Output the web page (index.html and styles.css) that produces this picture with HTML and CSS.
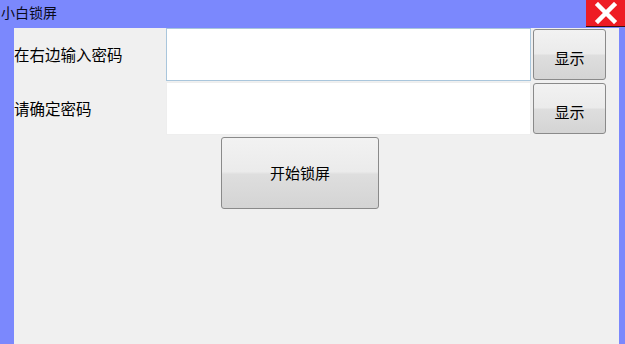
FILE: index.html
```html
<!DOCTYPE html>
<html>
<head>
<meta charset="utf-8">
<link rel="stylesheet" href="styles.css">
</head>
<body>
<div class="window">
  <div class="titlebar">
    <span class="title">小白锁屏</span>
    <div class="close">
      <svg width="24" height="22" viewBox="0 0 24 22"><path d="M4 3 L20 19 M20 3 L4 19" stroke="#fff" stroke-width="4.5" stroke-linecap="square"/></svg>
    </div>
  </div>
  <div class="body">
    <div class="row">
      <label class="label">在右边输入密码</label>
      <div class="input focused"></div>
      <button class="btn small">显示</button>
    </div>
    <div class="row">
      <label class="label">请确定密码</label>
      <div class="input"></div>
      <button class="btn small">显示</button>
    </div>
    <div class="actions">
      <button class="btn big">开始锁屏</button>
    </div>
  </div>
</div>
</body>
</html>
```
FILE: styles.css
```css
html, body {
  margin: 0;
  padding: 0;
  width: 625px;
  height: 344px;
  overflow: hidden;
  background: #7b88fd;
  font-family: "Noto Sans CJK SC", "Liberation Sans", sans-serif;
  font-size: 15px;
  color: #000;
}
.window {
  display: flex;
  flex-direction: column;
  height: 344px;
}
.titlebar {
  height: 28px;
  display: flex;
  align-items: flex-start;
  justify-content: space-between;
}
.title {
  padding-left: 1px;
  line-height: 24px;
  font-size: 14px;
  color: #0a0a1a;
}
.close {
  width: 39px;
  height: 26px;
  background: #ee1c24;
  border-bottom: 1px solid #3a1010;
  display: flex;
  align-items: center;
  justify-content: center;
}
.body {
  flex: 1;
  margin: 0 6px 0 14px;
  background: #f0f0f0;
  display: flex;
  flex-direction: column;
}
.row {
  display: grid;
  grid-template-columns: 150px 365px 73px;
  column-gap: 2px;
  align-items: start;
  height: 54px;
}
.label {
  font-size: 15.5px;
  line-height: 52px;
  color: #000;
}
.input {
  height: 53px;
  background: #fff;
  border: 1px solid #eeeeee;
  box-sizing: border-box;
}
.input.focused {
  border-color: #a9c6dc;
}
.btn {
  font-family: "Noto Sans CJK SC", "Liberation Sans", sans-serif;
  font-size: 15px;
  color: #000;
  border: 1px solid #8a8a8a;
  border-radius: 3px;
  background: linear-gradient(#f2f2f2 0%, #ebebeb 48%, #dedede 52%, #d4d4d4 100%);
  padding: 0;
  box-sizing: border-box;
}
.btn.small {
  height: 51px;
  margin-top: 1px;
  padding-top: 6px;
}
.actions {
  padding-left: 207px;
  padding-top: 1px;
}
.btn.big {
  width: 158px;
  height: 72px;
  padding-bottom: 2px;
}
```
